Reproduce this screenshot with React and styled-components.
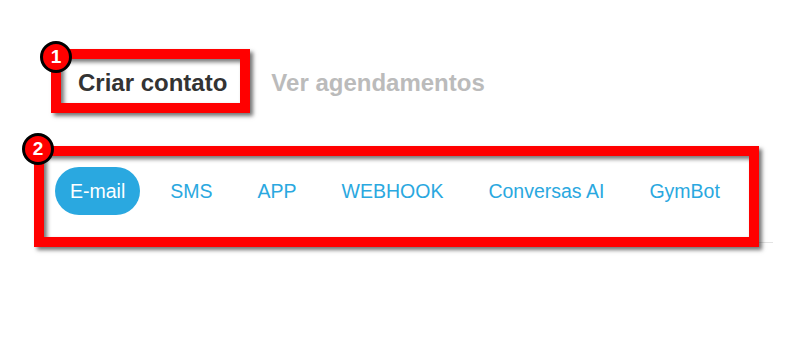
import React, { useState } from "react";
import styled, { createGlobalStyle } from "styled-components";

const GlobalStyle = createGlobalStyle`
  body {
    margin: 0;
    background: #fff;
    font-family: "Liberation Sans", Arial, sans-serif;
  }
`;

const Page = styled.div`
  position: relative;
  width: 808px;
  height: 343px;
  box-sizing: border-box;
  padding: 59px 35px 0;
`;

const TopNav = styled.div`
  display: flex;
  padding-left: 27px;
  gap: 12px;
`;

const TopTab = styled.div`
  padding: 12px 16px;
  font-size: 24px;
  line-height: 24px;
  font-weight: 700;
  color: ${(p) => (p.$active ? "#333" : "#bbb")};
  cursor: pointer;
`;

const TabList = styled.div`
  display: flex;
  gap: 15px;
  margin-top: 60px;
  padding: 0 0 27px 20px;
  border-bottom: 1px solid #e3e3e3;
`;

const Pill = styled.div`
  padding: 14px 15px;
  font-size: 19.5px;
  line-height: 20px;
  border-radius: 24px;
  color: ${(p) => (p.$active ? "#fff" : "#2aa8e0")};
  background: ${(p) => (p.$active ? "#2aa8e0" : "transparent")};
  cursor: pointer;
`;

/* annotation overlays drawn over the screenshot */
const Mark = styled.div`
  position: absolute;
  left: ${(p) => p.$x}px;
  top: ${(p) => p.$y}px;
  width: ${(p) => p.$w}px;
  height: ${(p) => p.$h}px;
  box-sizing: border-box;
  border: 10px solid #ff0000;
  box-shadow: 3px 3px 4px rgba(0, 0, 0, 0.55),
    inset 3px 3px 4px rgba(0, 0, 0, 0.55);
  pointer-events: none;
`;

const Badge = styled.div`
  position: absolute;
  left: ${(p) => p.$x}px;
  top: ${(p) => p.$y}px;
  width: 32px;
  height: 32px;
  box-sizing: border-box;
  border: 3px solid #000;
  border-radius: 50%;
  background: #ff0000;
  color: #fff;
  font-weight: 700;
  font-size: 19px;
  line-height: 26px;
  text-align: center;
`;

const tabs = ["E-mail", "SMS", "APP", "WEBHOOK", "Conversas AI", "GymBot"];

export default function App() {
  const [top, setTop] = useState(0);
  const [tab, setTab] = useState(0);

  return (
    <>
      <GlobalStyle />
      <Page>
        <TopNav>
          <TopTab $active={top === 0} onClick={() => setTop(0)}>Criar contato</TopTab>
          <TopTab $active={top === 1} onClick={() => setTop(1)}>Ver agendamentos</TopTab>
        </TopNav>
        <TabList>
          {tabs.map((t, i) => (
            <Pill key={t} $active={tab === i} onClick={() => setTab(i)}>
              {t}
            </Pill>
          ))}
        </TabList>

        <Mark $x={51} $y={49} $w={199} $h={64} />
        <Badge $x={40} $y={41}>1</Badge>
        <Mark $x={34} $y={146} $w={725} $h={101} />
        <Badge $x={22} $y={133}>2</Badge>
      </Page>
    </>
  );
}
